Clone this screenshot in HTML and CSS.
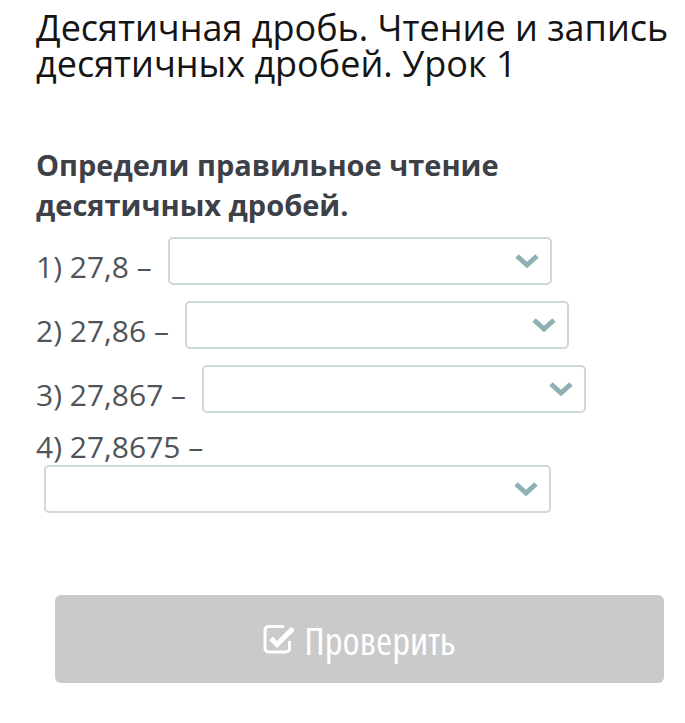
FILE: index.html
```html
<!DOCTYPE html>
<html lang="ru">
<head>
<meta charset="utf-8">
<title>Десятичная дробь</title>
<link rel="stylesheet" href="styles.css">
</head>
<body>
<div class="page">
  <h1 class="title">Десятичная дробь. Чтение и запись десятичных дробей. Урок 1</h1>
  <p class="question">Определи правильное чтение десятичных дробей.</p>
  <div class="items">
    <div class="item"><span class="label">1) 27,8 –</span><span class="select"><svg class="chev" viewBox="0 0 24 14" width="24" height="14"><polyline points="2,2 12,11 22,2"/></svg></span></div>
    <div class="item"><span class="label">2) 27,86 –</span><span class="select"><svg class="chev" viewBox="0 0 24 14" width="24" height="14"><polyline points="2,2 12,11 22,2"/></svg></span></div>
    <div class="item"><span class="label">3) 27,867 –</span><span class="select"><svg class="chev" viewBox="0 0 24 14" width="24" height="14"><polyline points="2,2 12,11 22,2"/></svg></span></div>
    <div class="item item-stacked"><span class="label">4) 27,8675 –</span><span class="select select-wide"><svg class="chev" viewBox="0 0 24 14" width="24" height="14"><polyline points="2,2 12,11 22,2"/></svg></span></div>
  </div>
  <button class="check-btn" type="button">
    <svg class="check-icon" viewBox="0 0 32 30" width="32" height="30">
      <path class="box" d="M21 2.5 H5.5 a3.5 3.5 0 0 0 -3.5 3.5 V24.5 a3.5 3.5 0 0 0 3.5 3.5 H23 a3.5 3.5 0 0 0 3.5 -3.5 V17"/>
      <path class="tick" d="M8 14.5 L14 20.5 L30 4.5"/>
    </svg>
    <span class="btn-label">Проверить</span>
  </button>
</div>
</body>
</html>
```
FILE: styles.css
```css
html, body {
  margin: 0;
  padding: 0;
  background: #ffffff;
}

.page {
  padding: 10px 8px 0 36px;
  font-family: "Open Sans", "Noto Sans", sans-serif;
}

.title {
  margin: 0;
  font-size: 36px;
  line-height: 36px;
  font-weight: 400;
  color: #141414;
}

.question {
  max-width: 600px;
  margin: 63px 0 0 0;
  font-size: 29px;
  line-height: 40px;
  font-weight: 700;
  color: #3d4047;
}

.items {
  margin-top: 12px;
}

.item {
  display: flex;
  flex-wrap: wrap;
  align-items: flex-start;
  column-gap: 8px;
  margin-bottom: 10px;
  font-size: 30px;
  color: #4f5459;
}

.item:last-child {
  margin-bottom: 0;
}

.label {
  line-height: 48px;
  padding-top: 6px;
  white-space: nowrap;
}

.item-stacked .label {
  line-height: 36px;
  padding-top: 0;
}

.select {
  display: flex;
  align-items: center;
  justify-content: flex-end;
  box-sizing: border-box;
  width: 384px;
  height: 48px;
  margin-left: 8px;
  padding-right: 11px;
  border: 2px solid #cdd8d8;
  border-radius: 5px;
  background: #ffffff;
}

.select-wide {
  width: 507px;
}

.chev {
  display: block;
}

.chev polyline {
  fill: none;
  stroke: #8fb1b6;
  stroke-width: 5;
}

.check-btn {
  display: flex;
  align-items: center;
  justify-content: center;
  gap: 9px;
  box-sizing: border-box;
  width: 609px;
  height: 88px;
  margin: 82px 0 0 19px;
  padding: 0;
  border: none;
  border-radius: 6px;
  background: #cacaca;
  color: #ffffff;
  font-family: "Open Sans", "Noto Sans", sans-serif;
  font-size: 39px;
  font-stretch: 86%;
  cursor: pointer;
}

.check-icon {
  display: block;
}

.check-icon path {
  fill: none;
  stroke: #ffffff;
}

.check-icon .box {
  stroke-width: 3;
}

.check-icon .tick {
  stroke-width: 5;
}
```
